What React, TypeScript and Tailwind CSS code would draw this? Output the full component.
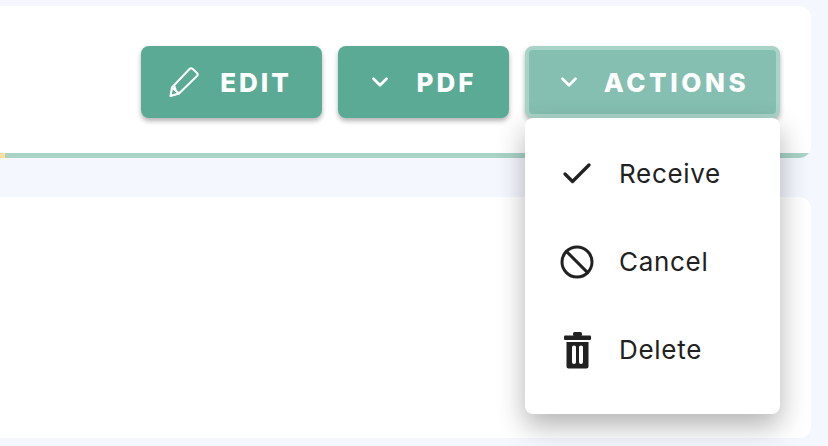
import { Ban, Check, ChevronDown } from "lucide-react"

function PencilIcon() {
  return (
    <svg width="32" height="32" viewBox="0 0 32 32" fill="none" stroke="white" strokeWidth="2" strokeLinejoin="round" strokeLinecap="round">
      <path d="M4 21.5 L21.5 3 Q23 1.5 24.5 2.8 L29 7 Q30.5 8.5 29 10 L11 27.5 L2.5 30 Z" />
      <path d="M4 21.5 L11 27.5" />
      <path d="M6.5 20.5 L8 25" />
    </svg>
  )
}

function TrashIcon() {
  return (
    <svg width="27" height="37" viewBox="0 0 27 37" fill="#212121">
      <rect x="0" y="3.5" width="27" height="4.5" rx="1" />
      <rect x="9" y="0" width="9" height="4" rx="1.5" />
      <path fillRule="evenodd" d="M2.5 10 H24.5 V34.5 Q24.5 36.5 22.5 36.5 H4.5 Q2.5 36.5 2.5 34.5 Z M8 15 V30 Q8 32 10 32 Q12 32 12 30 V15 Q12 13.5 10 13.5 Q8 13.5 8 15 Z M15 15 V30 Q15 32 17 32 Q19 32 19 30 V15 Q19 13.5 17 13.5 Q15 13.5 15 15 Z" />
    </svg>
  )
}

function MenuItem({ icon, label }: { icon: React.ReactNode; label: string }) {
  return (
    <div className="flex h-[88px] items-center">
      <div className="flex w-[94px] justify-center pl-[10px]">{icon}</div>
      <span className="pb-[2px] text-[26px] tracking-[0.7px] text-[#212121]">{label}</span>
    </div>
  )
}

export default function App() {
  return (
    <div className="flex h-[446px] w-[828px] flex-col overflow-hidden bg-[#f4f7fe] pt-[6px] font-['Inter',sans-serif]">
      <div className="mr-[17px] flex h-[152px] flex-col overflow-hidden rounded-r-xl bg-white">
        <div className="flex flex-1 items-start justify-end gap-4 pt-[40px] pr-[31px]">
          <button className="flex h-[72px] w-[181px] items-center justify-center gap-[20px] rounded-lg bg-[#5aaa96] pr-[3px] text-[26px] font-extrabold tracking-[3px] text-white shadow-[0_3px_5px_rgba(0,0,0,0.3)]">
            <PencilIcon />
            EDIT
          </button>
          <button className="flex h-[72px] w-[171px] items-center justify-center gap-[24px] rounded-lg bg-[#5aaa96] pr-[4px] text-[26px] font-extrabold tracking-[3px] text-white shadow-[0_3px_5px_rgba(0,0,0,0.3)]">
            <ChevronDown size={26} strokeWidth={2.5} />
            PDF
          </button>
          <div className="w-[255px]">
            <button className="flex h-[72px] w-full items-center justify-center gap-[22px] rounded-lg border-4 border-[#a9d3c7] bg-[#85bfb1] text-[26px] font-extrabold tracking-[3.6px] text-white shadow-[0_3px_5px_rgba(0,0,0,0.3)]">
              <ChevronDown size={26} strokeWidth={2.5} />
              ACTIONS
            </button>
          </div>
        </div>
        <div className="flex h-[5px]">
          <div className="w-[5px] bg-[#fddf9b]" />
          <div className="flex-1 bg-[#a9d3c7]" />
        </div>
      </div>

      <div className="mt-[39px] mr-[17px] h-[241px] rounded-r-xl bg-white" />

      <div className="absolute top-[118px] left-[525px] w-[255px] rounded-lg bg-white pt-[12px] pb-[20px] shadow-[0_12px_28px_rgba(0,0,0,0.3)]">
        <MenuItem icon={<Check size={36} strokeWidth={2.2} color="#212121" />} label="Receive" />
        <MenuItem icon={<Ban size={36} strokeWidth={2} color="#212121" />} label="Cancel" />
        <MenuItem icon={<TrashIcon />} label="Delete" />
      </div>
    </div>
  )
}
